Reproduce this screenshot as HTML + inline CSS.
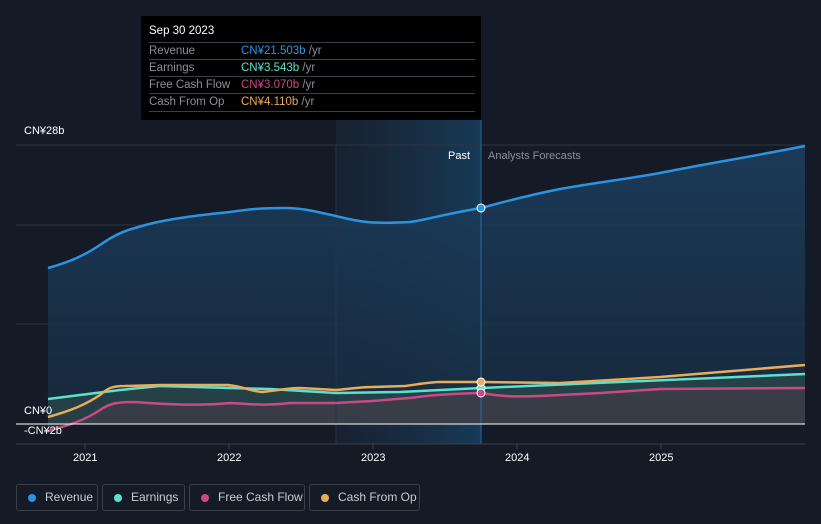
<!DOCTYPE html>
<html><head><meta charset="utf-8"><style>
body{margin:0;width:821px;height:524px;background:#151b26;font-family:"Liberation Sans",sans-serif;overflow:hidden;position:relative}
.t{position:absolute;font-size:11px;color:#fff;white-space:nowrap}
.tip{position:absolute;left:141px;top:16px;width:340px;height:104px;background:#000}
.row{position:absolute;left:8px;width:326px;border-top:1px solid #3a3f48;font-size:11.5px;color:#8a8f98;height:17px;line-height:17px;white-space:nowrap}
.row span{position:absolute;left:92px}
.leg{position:absolute;top:484px;height:27px;border:1px solid #3a3f4a;border-radius:3px;font-size:12px;color:#c8ccd2;line-height:25px;box-sizing:border-box;padding-left:28px;white-space:nowrap}
.leg i{position:absolute;left:11px;top:9px;width:8px;height:8px;border-radius:50%}
</style></head><body>
<svg width="821" height="524" style="position:absolute;left:0;top:0">
<defs>
<linearGradient id="pg" x1="0" x2="1"><stop offset="0" stop-color="#1b2c40" stop-opacity="0.4"/><stop offset="1" stop-color="#173a58"/></linearGradient>
<linearGradient id="rg" x1="0" y1="0" x2="0" y2="1"><stop offset="0" stop-color="#1c3f60"/><stop offset="1" stop-color="#172a3e"/></linearGradient>
</defs>
<rect x="336" y="120" width="145" height="324" fill="url(#pg)"/>
<line x1="16" y1="145" x2="805" y2="145" stroke="#2e3540"/>
<line x1="16" y1="225" x2="805" y2="225" stroke="#2e3540"/>
<line x1="16" y1="324" x2="805" y2="324" stroke="#2e3540"/>
<path d="M48,268 C70,262 85,255 100,245 C110,238 120,232 135,228 C160,220 190,216 230,212 C250,209 262,208 285,208 C300,208 310,210 340,217 C360,222 372,224 410,222 C425,220 440,215 481,208 C500,203 520,197 560,189 C600,182 620,180 660,173 C700,165 760,155 805,146 L805,424 L48,424 Z" fill="url(#rg)" opacity="0.85"/>
<path d="M48,399 L120,390 L160,386 L230,388 L270,389 L336,393 L400,392 L481,388 L805,374 L805,424 L48,424Z" fill="#3a5a55" opacity="0.45"/>
<path d="M48,431 C70,425 85,420 100,410 C110,403 118,402 135,402 C160,404 200,406 230,403 C250,404 262,406 290,403 L336,403 L372,401 L410,398 C425,396 440,394 481,393 C500,396 510,397 540,396 L600,393 L660,389 L805,388 L805,424 L48,424Z" fill="#4a3a48" opacity="0.5"/>
<line x1="481" y1="120" x2="481" y2="444" stroke="#2a6a9a"/>
<line x1="336" y1="145" x2="336" y2="444" stroke="#24344a"/>
<path d="M48,399 L120,390 L160,386 L230,388 L270,389 L336,393 L400,392 L481,388 L805,374" fill="none" stroke="#5ee0cf" stroke-width="2.5"/>
<path d="M48,417 C70,411 85,405 100,395 C108,388 112,386 125,386 L160,385 L228,385 C245,387 250,391 262,392 C280,390 290,388 300,388 L336,390 C350,389 360,387 372,387 L405,386 C420,384 430,382 440,382 L481,382 L560,383 L660,377 L805,365" fill="none" stroke="#e8ac5a" stroke-width="2.5"/>
<path d="M48,431 C70,425 85,420 100,410 C110,403 118,402 135,402 C160,404 200,406 230,403 C250,404 262,406 290,403 L336,403 L372,401 L410,398 C425,396 440,394 481,393 C500,396 510,397 540,396 L600,393 L660,389 L805,388" fill="none" stroke="#c84a86" stroke-width="2.5"/>
<path d="M48,268 C70,262 85,255 100,245 C110,238 120,232 135,228 C160,220 190,216 230,212 C250,209 262,208 285,208 C300,208 310,210 340,217 C360,222 372,224 410,222 C425,220 440,215 481,208 C500,203 520,197 560,189 C600,182 620,180 660,173 C700,165 760,155 805,146" fill="none" stroke="#2b94e0" stroke-width="2.5"/>
<line x1="16" y1="424" x2="805" y2="424" stroke="#fff" stroke-width="1"/>
<line x1="16" y1="444" x2="805" y2="444" stroke="#3a414c"/>
<g stroke="#3a414c"><line x1="85" y1="444" x2="85" y2="449"/><line x1="229" y1="444" x2="229" y2="449"/><line x1="373" y1="444" x2="373" y2="449"/><line x1="517" y1="444" x2="517" y2="449"/><line x1="661" y1="444" x2="661" y2="449"/></g>
<circle cx="481" cy="208" r="4" fill="#2b94e0" stroke="#fff" stroke-width="1"/>
<circle cx="481" cy="388" r="4" fill="#5ee0cf" stroke="#fff" stroke-width="1"/>
<circle cx="481" cy="382" r="4" fill="#e8ac5a" stroke="#fff" stroke-width="1"/>
<circle cx="481" cy="393" r="4" fill="#c84a86" stroke="#fff" stroke-width="1"/>
</svg>
<div class="t" style="left:24px;top:125px">CN¥28b</div>
<div class="t" style="left:24px;top:405px">CN¥0</div>
<div class="t" style="left:24px;top:425px">-CN¥2b</div>
<div class="t" style="left:448px;top:150px">Past</div>
<div class="t" style="left:488px;top:150px;color:#8a9099">Analysts Forecasts</div>
<div class="t" style="left:73px;top:452px">2021</div>
<div class="t" style="left:217px;top:452px">2022</div>
<div class="t" style="left:361px;top:452px">2023</div>
<div class="t" style="left:505px;top:452px">2024</div>
<div class="t" style="left:649px;top:452px">2025</div>
<div class="tip">
<div class="t" style="left:8px;top:9px;font-size:11.5px">Sep 30 2023</div>
<div class="row" style="top:26px">Revenue<span style="color:#2b94e0">CN¥21.503b <b style="font-weight:normal;color:#8a8f98">/yr</b></span></div>
<div class="row" style="top:43px">Earnings<span style="color:#5ee0cf">CN¥3.543b <b style="font-weight:normal;color:#8a8f98">/yr</b></span></div>
<div class="row" style="top:60px">Free Cash Flow<span style="color:#c84a86">CN¥3.070b <b style="font-weight:normal;color:#8a8f98">/yr</b></span></div>
<div class="row" style="top:77px;border-bottom:1px solid #3a3f48">Cash From Op<span style="color:#e8ac5a">CN¥4.110b <b style="font-weight:normal;color:#8a8f98">/yr</b></span></div>
</div>
<div class="leg" style="left:16px;width:82px"><i style="background:#2b94e0"></i>Revenue</div>
<div class="leg" style="left:102px;width:83px"><i style="background:#5ee0cf"></i>Earnings</div>
<div class="leg" style="left:189px;width:116px"><i style="background:#c84a86"></i>Free Cash Flow</div>
<div class="leg" style="left:309px;width:111px"><i style="background:#e8ac5a"></i>Cash From Op</div>
</body></html>
